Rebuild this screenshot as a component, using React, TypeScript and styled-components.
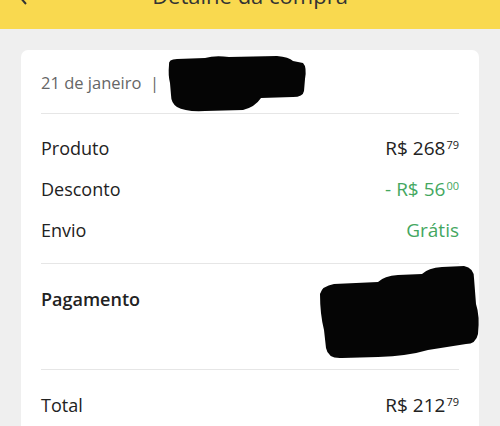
import styled, { createGlobalStyle } from "styled-components";

const GlobalStyle = createGlobalStyle`
  html, body {
    margin: 0;
    padding: 0;
    background: #efefef;
    font-family: "Open Sans", "Lato", sans-serif;
    color: #222;
  }
`;

const Page = styled.div`
  width: 500px;
  height: 426px;
  overflow: hidden;
  background: #efefef;
`;

const Header = styled.header`
  height: 29px;
  background: #f9d94f;
  position: relative;
  display: flex;
  justify-content: center;
  align-items: flex-start;
  overflow: hidden;
`;

const Title = styled.div`
  margin-top: -19px;
  font-size: 22px;
  line-height: 28px;
  color: #333;
`;

const Back = styled.svg`
  position: absolute;
  left: 16px;
  top: -14px;
`;

const Card = styled.div`
  margin: 21px 21px 0;
  background: #fff;
  border-radius: 7px;
  padding: 0 20px;
`;

const Section = styled.div<{ $top: number; $bottom: number }>`
  padding: ${(p) => p.$top}px 0 ${(p) => p.$bottom}px;
  border-bottom: 1px solid #e6e6e6;
  &:last-child {
    border-bottom: none;
  }
`;

const DateRow = styled.div`
  position: relative;
  font-size: 16.5px;
  line-height: 22px;
  color: #666;
`;

const Row = styled.div<{ $h?: number }>`
  position: relative;
  display: flex;
  justify-content: space-between;
  align-items: flex-start;
  height: ${(p) => p.$h ?? 41}px;
  font-size: 18px;
  line-height: 22px;
  padding-top: 9px;
  box-sizing: border-box;
`;

const Label = styled.span<{ $bold?: boolean }>`
  font-weight: ${(p) => (p.$bold ? 600 : 400)};
  color: #222;
`;

const Value = styled.span<{ $green?: boolean }>`
  font-size: 19px;
  color: ${(p) => (p.$green ? "#44a75f" : "#222")};
  sup {
    font-size: 11px;
    vertical-align: top;
    position: relative;
    top: -3px;
    margin-left: 1px;
  }
`;

const Blot = styled.svg<{ $l: number; $t: number }>`
  position: absolute;
  left: ${(p) => p.$l}px;
  top: ${(p) => p.$t}px;
`;

const Price = ({ main, cents, green }: { main: string; cents: string; green?: boolean }) => (
  <Value $green={green}>
    {main}
    <sup>{cents}</sup>
  </Value>
);

export default function App() {
  return (
    <Page>
      <GlobalStyle />
      <Header>
        <Back width="14" height="20" viewBox="0 0 14 20">
          <path d="M10 2 L3 10 L10 18" stroke="#333" strokeWidth="2" fill="none" />
        </Back>
        <Title>Detalhe da compra</Title>
      </Header>
      <Card>
        <Section $top={22} $bottom={19}>
          <DateRow>
            21 de janeiro&nbsp; |
            <Blot $l={124} $t={-17} width="142" height="58" viewBox="0 0 142 58">
              <path
                d="M4 10 Q3 4 12 4 L40 3 Q50 0 64 2 L112 1 Q124 2 128 6 L138 8 Q142 12 140 24 L139 36 Q138 42 128 42 L96 43 Q90 52 78 55 L40 56 Q20 57 12 52 Q6 48 6 40 L5 28 Q3 20 4 10 Z"
                fill="#050505"
              />
            </Blot>
          </DateRow>
        </Section>
        <Section $top={14} $bottom={12}>
          <Row>
            <Label>Produto</Label>
            <Price main="R$ 268" cents="79" />
          </Row>
          <Row>
            <Label>Desconto</Label>
            <Price main="- R$ 56" cents="00" green />
          </Row>
          <Row>
            <Label>Envio</Label>
            <Value $green>Grátis</Value>
          </Row>
        </Section>
        <Section $top={15} $bottom={0}>
          <Row $h={90}>
            <Label $bold>Pagamento</Label>
            <Blot $l={277} $t={-15} width="162" height="96" viewBox="0 0 162 96">
              <path
                d="M2 30 Q4 22 16 20 L60 18 Q66 12 80 11 L104 10 Q110 4 124 3 L146 2 Q156 4 156 14 L158 40 Q162 52 160 70 Q158 80 148 80 L110 86 Q90 92 60 93 L24 94 Q10 95 8 84 L6 66 Q2 50 2 30 Z"
                fill="#050505"
              />
            </Blot>
          </Row>
        </Section>
        <Section $top={15} $bottom={20}>
          <Row>
            <Label>Total</Label>
            <Price main="R$ 212" cents="79" />
          </Row>
        </Section>
      </Card>
    </Page>
  );
}
